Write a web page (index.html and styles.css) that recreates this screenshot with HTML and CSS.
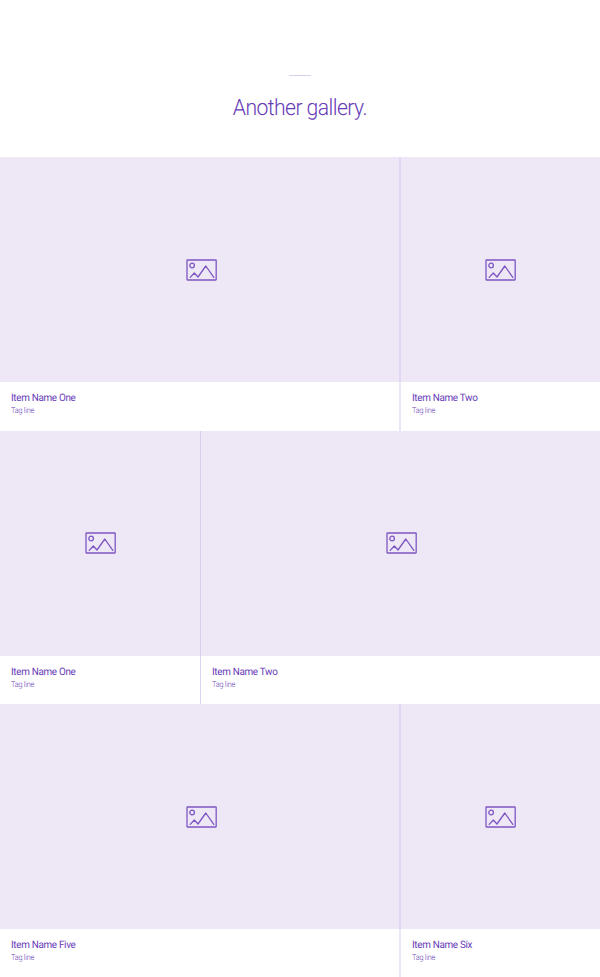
FILE: index.html
```html
<!DOCTYPE html>
<html lang="en">
<head>
<meta charset="utf-8">
<title>Another gallery.</title>
<link rel="stylesheet" href="styles.css">
</head>
<body>
<svg class="defs" aria-hidden="true">
  <symbol id="picture" viewBox="0 0 32 22">
    <rect x="1" y="1" width="29.2" height="20" rx=".5"/>
    <circle cx="6.1" cy="6.5" r="2.3"/>
    <path d="M4.2 18.4 8.3 14 12 18 19.8 7 27.8 18.4"/>
  </symbol>
</svg>
<header class="header">
  <span class="rule"></span>
  <h1 class="title">Another gallery.</h1>
</header>
<main>
  <section class="row wide-first">
    <article class="item"><div class="image"><svg class="icon"><use href="#picture"/></svg></div><div class="caption"><h2 class="name">Item Name One</h2><p class="tag">Tag line</p></div></article>
    <article class="item"><div class="image"><svg class="icon"><use href="#picture"/></svg></div><div class="caption"><h2 class="name">Item Name Two</h2><p class="tag">Tag line</p></div></article>
  </section>
  <section class="row wide-last">
    <article class="item"><div class="image"><svg class="icon"><use href="#picture"/></svg></div><div class="caption"><h2 class="name">Item Name One</h2><p class="tag">Tag line</p></div></article>
    <article class="item"><div class="image"><svg class="icon"><use href="#picture"/></svg></div><div class="caption"><h2 class="name">Item Name Two</h2><p class="tag">Tag line</p></div></article>
  </section>
  <section class="row wide-first">
    <article class="item"><div class="image"><svg class="icon"><use href="#picture"/></svg></div><div class="caption"><h2 class="name">Item Name Five</h2><p class="tag">Tag line</p></div></article>
    <article class="item"><div class="image"><svg class="icon"><use href="#picture"/></svg></div><div class="caption"><h2 class="name">Item Name Six</h2><p class="tag">Tag line</p></div></article>
  </section>
</main>
</body>
</html>
```
FILE: styles.css
```css
* { box-sizing: border-box; }
html { overflow: hidden; }
body {
  margin: 0;
  height: 977px;
  overflow: hidden;
  background: #fff;
  color: #673ab7;
  font-family: Roboto, "Liberation Sans", sans-serif;
  text-rendering: geometricPrecision;
}
.defs { display: block; width: 0; height: 0; }
.header {
  height: 157.4px;
  padding-top: 75px;
  display: flex;
  flex-direction: column;
  align-items: center;
}
.rule { width: 22px; height: 1px; background: #d9cff0; }
.title {
  margin: 18px 0 0;
  font-size: 22.5px;
  line-height: 28px;
  font-weight: 300;
  letter-spacing: -0.6px;
  transform: translateX(-0.5px) scaleX(0.94);
}
.row { display: grid; height: 273.4px; }
.wide-first { grid-template-columns: 399px 201px; }
.wide-last { grid-template-columns: 200px 400px; }
.item + .item { border-left: 1px solid #ded3f2; }
.wide-first .item + .item { border-left: 2px solid #ece6f8; }
.image {
  height: 225px;
  display: flex;
  align-items: center;
  justify-content: center;
  background: #ede7f6;
}
.item + .item .image { margin-left: -1px; border-left: 1px solid #d9cdf0; }
.wide-first .item + .item .image { margin-left: -2px; border-left: 2px solid #e0d7f2; }
.wide-first .item:first-child .image { padding-left: 5px; }
.wide-last .item:last-child .image { padding-left: 2px; }
.wide-last .item:first-child .image { padding-left: 1px; }
.icon {
  width: 32px;
  height: 22px;
  fill: none;
  stroke: #7e57c2;
  stroke-width: 1.3;
  stroke-linejoin: round;
  stroke-linecap: round;
}
.caption { padding: 9px 11px 0; }
.wide-first .item + .item .caption { padding-left: 10.6px; }
.name, .tag { margin: 0; transform-origin: 0 50%; }
.name { font-size: 10.3px; line-height: 13px; font-weight: 400; letter-spacing: -0.33px; transform: scaleX(0.96); }
.tag { font-size: 8px; line-height: 13px; font-weight: 300; letter-spacing: -0.27px; transform: scaleX(0.92); }
```
